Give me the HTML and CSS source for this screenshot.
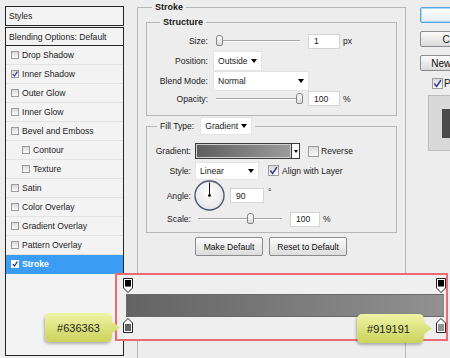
FILE: index.html
```html
<!DOCTYPE html>
<html>
<head>
<meta charset="utf-8">
<link rel="stylesheet" href="styles.css">
</head>
<body>
<div class="dialog">
  <aside class="styles-panel">
    <div class="panel-box panel-title">Styles</div>
    <div class="panel-box panel-blend">Blending Options: Default</div>
    <ul class="style-list">
      <li class="style-item"><span class="cb"></span>Drop Shadow</li>
      <li class="style-item"><span class="cb"><svg viewBox="0 0 6 6"><path d="M0.8 3 L2.4 5 L5.4 0.6" /></svg></span>Inner Shadow</li>
      <li class="style-item"><span class="cb"></span>Outer Glow</li>
      <li class="style-item"><span class="cb"></span>Inner Glow</li>
      <li class="style-item"><span class="cb"></span>Bevel and Emboss</li>
      <li class="style-item sub"><span class="cb"></span>Contour</li>
      <li class="style-item sub"><span class="cb"></span>Texture</li>
      <li class="style-item"><span class="cb"></span>Satin</li>
      <li class="style-item"><span class="cb"></span>Color Overlay</li>
      <li class="style-item"><span class="cb"></span>Gradient Overlay</li>
      <li class="style-item"><span class="cb"></span>Pattern Overlay</li>
      <li class="style-item selected"><span class="cb cb-white"><svg viewBox="0 0 6 6"><path d="M0.8 3 L2.4 5 L5.4 0.6" /></svg></span>Stroke</li>
    </ul>
  </aside>

  <fieldset class="group group-stroke">
    <legend>Stroke</legend>

    <fieldset class="group group-structure">
      <legend>Structure</legend>
      <div class="form-grid structure-grid">
        <span class="lbl">Size:</span>
        <div class="ctrl">
          <span class="slider"><span class="thumb" style="left:3%"></span></span>
          <span class="field w32">1</span><span class="unit">px</span>
        </div>

        <span class="lbl">Position:</span>
        <div class="ctrl"><span class="select w49">Outside<i class="arrow"></i></span></div>

        <span class="lbl">Blend Mode:</span>
        <div class="ctrl"><span class="select w96">Normal<i class="arrow"></i></span></div>

        <span class="lbl">Opacity:</span>
        <div class="ctrl">
          <span class="slider"><span class="thumb" style="left:99%"></span></span>
          <span class="field w32">100</span><span class="unit">%</span>
        </div>
      </div>
    </fieldset>

    <fieldset class="group group-fill">
      <legend><span>Fill Type:</span><span class="select w52 h18">Gradient<i class="arrow"></i></span></legend>
      <div class="form-grid fill-grid">
        <span class="lbl">Gradient:</span>
        <div class="ctrl">
          <span class="swatch"><span class="swatch-fill"></span><span class="swatch-drop"><i class="arrow small"></i></span></span>
          <span class="cb cb-lg gap-reverse"></span><span class="cb-text">Reverse</span>
        </div>

        <span class="lbl">Style:</span>
        <div class="ctrl">
          <span class="select w64 h18">Linear<i class="arrow"></i></span>
          <span class="cb cb-lg gap-align"><svg viewBox="0 0 9 9"><path d="M1.3 4.6 L3.6 7.4 L7.9 1.1" /></svg></span><span class="cb-text gap-text">Align with Layer</span>
        </div>

        <span class="lbl">Angle:</span>
        <div class="ctrl">
          <svg class="dial" viewBox="0 0 31 31">
            <defs>
              <radialGradient id="dialfill" cx="50%" cy="40%" r="60%">
                <stop offset="0" stop-color="#ffffff"/>
                <stop offset="1" stop-color="#e4e4e4"/>
              </radialGradient>
            </defs>
            <circle cx="15.5" cy="15.5" r="14.5" fill="url(#dialfill)" stroke="#4d5679" stroke-width="1.4"/>
            <line x1="15.5" y1="15.5" x2="15.5" y2="2.5" stroke="#111" stroke-width="1"/>
            <circle cx="15.5" cy="15.5" r="1.4" fill="#111"/>
          </svg>
          <span class="field w34">90</span><span class="unit deg">°</span>
        </div>

        <span class="lbl">Scale:</span>
        <div class="ctrl">
          <span class="slider"><span class="thumb" style="left:62%"></span></span>
          <span class="field w30">100</span><span class="unit">%</span>
        </div>
      </div>
    </fieldset>

    <div class="btn-row">
      <button class="btn btn-make">Make Default</button>
      <button class="btn btn-reset">Reset to Default</button>
    </div>
  </fieldset>

  <div class="actions">
    <button class="abtn ok">OK</button>
    <button class="abtn">Cancel</button>
    <button class="abtn">New Style...</button>
    <div class="preview-check"><span class="cb cb-lg"><svg viewBox="0 0 9 9"><path d="M1.3 4.6 L3.6 7.4 L7.9 1.1" /></svg></span><span class="cb-text">Preview</span></div>
    <div class="preview-box"><div class="preview-swatch"></div></div>
  </div>
</div>

<div class="grad-editor">
  <div class="stops">
    <svg class="stop" viewBox="0 0 10 15"><path d="M0.5 0.5 H9.5 V10 L5 14.5 L0.5 10 Z" fill="#fff" stroke="#222"/><rect x="2" y="2" width="6" height="6.5" fill="#000"/></svg>
    <svg class="stop" viewBox="0 0 10 15"><path d="M0.5 0.5 H9.5 V10 L5 14.5 L0.5 10 Z" fill="#fff" stroke="#222"/><rect x="2" y="2" width="6" height="6.5" fill="#000"/></svg>
  </div>
  <div class="grad-bar"></div>
  <div class="stops">
    <svg class="stop" viewBox="0 0 10 15"><path d="M5 0.5 L9.5 5 V14.5 H0.5 V5 Z" fill="#fff" stroke="#222"/><rect x="2" y="6" width="6" height="7" fill="#636363"/></svg>
    <svg class="stop" viewBox="0 0 10 15"><path d="M5 0.5 L9.5 5 V14.5 H0.5 V5 Z" fill="#fff" stroke="#222"/><rect x="2" y="6" width="6" height="7" fill="#919191"/></svg>
  </div>
</div>

<div class="callout callout-left">#636363</div>
<div class="callout callout-right">#919191</div>
</body>
</html>
```

FILE: styles.css
```css
* { box-sizing: border-box; }
html, body { margin: 0; padding: 0; }
body {
  width: 450px;
  height: 358px;
  overflow: hidden;
  position: relative;
  background: #ededed;
  font-family: "Liberation Sans", Arial, sans-serif;
  font-size: 8.6px;
  color: #1c1c1c;
}

.dialog {
  display: flex;
  align-items: flex-start;
  width: 450px;
  height: 358px;
  overflow: hidden;
}

/* ---------- left styles panel ---------- */
.styles-panel {
  flex-shrink: 0;
  width: 119px;
  height: 350px;
  margin: 6px 0 0 5px;
  display: flex;
  flex-direction: column;
}
.panel-box {
  border: 1px solid #262626;
  background: #f3f3f3;
  padding-left: 3px;
  display: flex;
  align-items: center;
}
.panel-title { height: 20px; }
.panel-blend { height: 19px; margin-top: 1px; }
.style-list {
  list-style: none;
  margin: 0;
  padding: 0;
  flex: 1;
  border: 1px solid #262626;
  border-top: 0;
  background: #f3f3f3;
}
.style-item {
  height: 19px;
  display: flex;
  align-items: center;
  gap: 3px;
  padding-left: 5px;
  border-bottom: 1px solid #e2e2e2;
}
.style-item.sub { padding-left: 16px; }
.style-item.selected {
  background: #3b9cf4;
  color: #fff;
  font-weight: bold;
  border-bottom-color: #3b9cf4;
}

/* checkboxes */
.cb {
  flex-shrink: 0;
  display: inline-flex;
  width: 8px;
  height: 8px;
  border: 1px solid #9c9c9c;
  background: linear-gradient(#d9d9d9, #fbfbfb);
}
.cb svg { width: 100%; height: 100%; display: block; overflow: visible; }
.cb path { fill: none; stroke: #2c3c90; stroke-width: 1.2; }
.cb-white { background: #fff; border-color: #fff; }
.cb-white path { stroke: #1b2a70; }
.cb-lg { width: 11px; height: 11px; }
.cb-lg path { stroke-width: 1.5; }
.cb-text { margin-left: 2px; }

/* ---------- fieldsets ---------- */
.group {
  margin: 0;
  padding: 0;
  min-width: 0;
  border: 1px solid #b6b6b6;
}
.group > legend {
  padding: 0 3px;
  font-weight: bold;
  font-size: 9px;
  line-height: 12px;
  color: #1a1a1a;
}
.group-stroke {
  flex-shrink: 0;
  width: 269px;
  height: 400px;
  margin: 1px 0 0 13px;
  padding: 0 8px;
}
.group-stroke > legend { margin-left: 6px; }

.group-structure {
  margin-top: 3px;
  padding: 3px 0 9px 0;
}
.group-structure > legend { margin-left: 13px; }

.group-fill {
  margin-top: 1px;
  padding: 6px 0 5px 0;
}
.group-fill > legend {
  display: flex;
  align-items: center;
  gap: 6px;
  margin-left: 10px;
  font-weight: normal;
  font-size: 8.6px;
  line-height: 18px;
}

/* ---------- form grids ---------- */
.form-grid { display: grid; align-items: center; }
.structure-grid {
  grid-template-columns: 61px 1fr;
  grid-template-rows: 20px 20px 20px 15px;
  column-gap: 5px;
}
.fill-grid {
  grid-template-columns: 44px 1fr;
  grid-template-rows: 20px 19px 31px 16px;
  column-gap: 4px;
}
.lbl { text-align: right; }
.ctrl { display: flex; align-items: center; height: 100%; }

.field {
  height: 15px;
  background: #fff;
  border: 1px solid #d4d4d4;
  padding-left: 5px;
  display: flex;
  align-items: center;
}
.w30 { width: 30px; }
.w32 { width: 32px; }
.w34 { width: 34px; }
.unit { margin-left: 3px; }
.unit.deg { margin-left: 4px; align-self: flex-start; margin-top: 8px; line-height: 8px; }

.select {
  height: 20px;
  background: #fff;
  border: 1px solid #e4e4e4;
  display: flex;
  align-items: center;
  justify-content: space-between;
  padding: 0 4px;
}
.select.h18 { height: 18px; }
.w49 { width: 49px; }
.w52 { width: 52px; }
.w64 { width: 64px; }
.w96 { width: 96px; }
.arrow {
  display: block;
  width: 0;
  height: 0;
  border-left: 3.5px solid transparent;
  border-right: 3.5px solid transparent;
  border-top: 4px solid #000;
}
.arrow.small {
  border-left-width: 2.5px;
  border-right-width: 2.5px;
  border-top-width: 3px;
}

/* sliders */
.slider {
  position: relative;
  width: 84px;
  height: 12px;
  margin: 0 8px 0 3px;
}
.slider::before {
  content: "";
  position: absolute;
  left: 0;
  right: 0;
  top: 5px;
  height: 1px;
  background: #a8a8a8;
  box-shadow: 0 1px 0 #fff;
}
.thumb {
  position: absolute;
  top: 0;
  width: 7px;
  height: 11px;
  margin-left: -3px;
  border: 1px solid #858585;
  border-radius: 3px 3px 2px 2px;
  background: linear-gradient(#ffffff, #d9d9d9);
}

/* gradient swatch */
.swatch {
  width: 105px;
  height: 16px;
  border: 1px solid #3a3a3a;
  background: #fff;
  display: flex;
}
.swatch-fill {
  flex: 1;
  border: 1px solid #d0d0d0;
  background: linear-gradient(to right, #5e5e5e, #9b9b9b);
}
.swatch-drop {
  width: 8px;
  border-left: 1px solid #3a3a3a;
  display: flex;
  align-items: center;
  justify-content: center;
}
.gap-reverse { margin-left: 8px; }
.gap-align { margin-left: 9px; }
.gap-text { margin-left: 3px; }

.dial {
  width: 31px;
  height: 31px;
  margin: 0 5px 0 -1px;
  display: block;
}

/* buttons */
.btn-row {
  display: flex;
  gap: 6px;
  margin: 4px 0 0 49px;
}
.btn {
  height: 19px;
  padding: 0;
  border: 1px solid #8b8b8b;
  border-radius: 2px;
  background: linear-gradient(#fdfdfd, #dcdcdc);
  font-family: inherit;
  font-size: 8.6px;
  color: #111;
}
.btn-make { width: 68px; }
.btn-reset { width: 78px; }

/* ---------- right actions ---------- */
.actions {
  flex-shrink: 0;
  width: 90px;
  margin-left: 14px;
  padding-top: 7px;
  display: flex;
  flex-direction: column;
}
.abtn {
  width: 76px;
  height: 16px;
  margin-bottom: 8px;
  padding: 0;
  border: 1px solid #8b8b8b;
  border-radius: 2px;
  background: linear-gradient(#fbfbfb, #dadada);
  font-family: inherit;
  font-size: 10px;
  color: #111;
}
.abtn.ok {
  border-color: #5aa6dc;
  box-shadow: inset 0 0 0 1px #a9d6f4;
  background: linear-gradient(#fdfdfd, #e6eef4);
}
.preview-check {
  display: flex;
  align-items: center;
  height: 12px;
  margin-top: -2px;
  padding-left: 12px;
  font-size: 10px;
}
.preview-check .cb-text { margin-left: 1px; }
.preview-box {
  width: 60px;
  height: 56px;
  margin: 6px 0 0 8px;
  padding: 13px 0 0 13px;
  border: 1px solid #bcbcbc;
  background: #d8d8d8;
}
.preview-swatch {
  width: 30px;
  height: 29px;
  background: #4a4a4a;
}

/* ---------- gradient editor overlay ---------- */
.grad-editor {
  position: absolute;
  left: 115px;
  top: 273px;
  width: 333px;
  height: 68px;
  border: 2px solid #ec6a72;
  background: #efefef;
  padding: 3px 0 0 6px;
  z-index: 1;
}
.stops {
  display: flex;
  justify-content: space-between;
  height: 15px;
}
.stop { width: 10px; height: 15px; display: block; }
.grad-bar {
  height: 23px;
  margin: 1px 2px 1px 3px;
  background: linear-gradient(to right, #636363, #919191);
  border: 1px solid #6a6a6a;
  border-right-color: #888;
}

/* ---------- callouts ---------- */
.callout {
  position: absolute;
  height: 29px;
  display: flex;
  align-items: center;
  justify-content: center;
  font-size: 11px;
  color: #1e1e1e;
  border-radius: 5px;
  background: linear-gradient(#eff4a6, #cbd25b);
  box-shadow: -1px 2px 3px rgba(0, 0, 0, 0.28);
  z-index: 2;
}
.callout::after {
  content: "";
  position: absolute;
  right: -8px;
  top: 8px;
  width: 9px;
  height: 13px;
  background: linear-gradient(#e3e886, #d6dc70);
  clip-path: polygon(0 0, 100% 50%, 0 100%);
}
.callout-left { left: 45px; top: 313px; width: 67px; }
.callout-right { left: 357px; top: 314px; width: 67px; padding-right: 4px; }
```
